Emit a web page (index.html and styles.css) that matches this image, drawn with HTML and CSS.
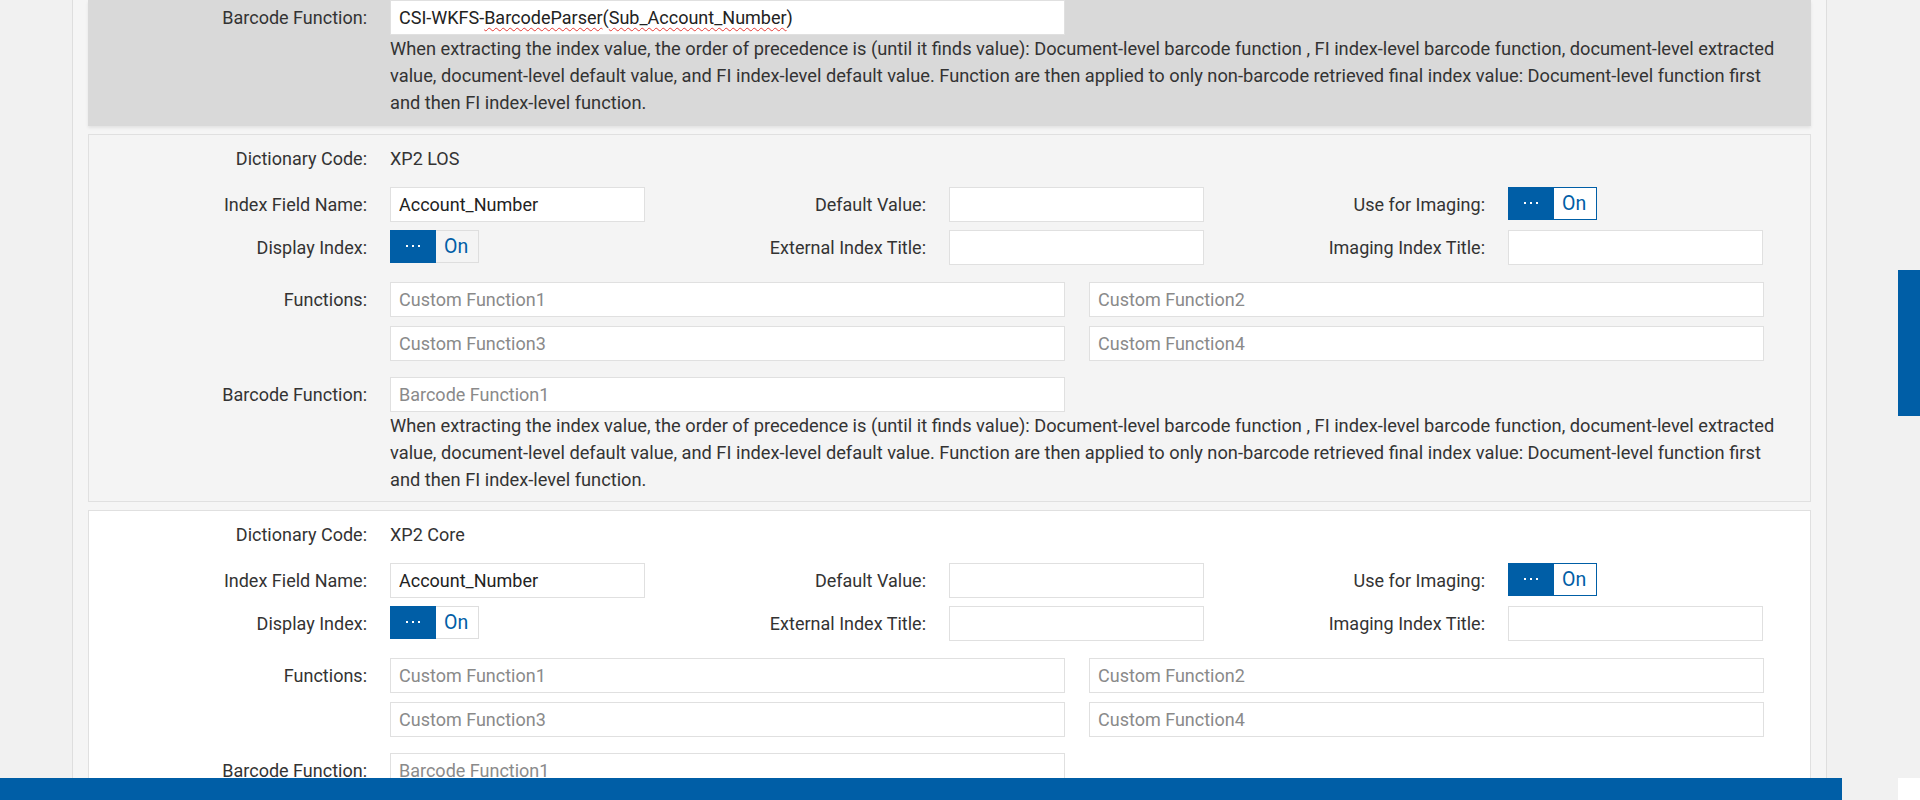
FILE: index.html
```html
<!DOCTYPE html>
<html lang="en">
<head>
<meta charset="utf-8">
<title>Index Fields</title>
<link rel="stylesheet" href="styles.css">
</head>
<body>
<div class="page">
  <main class="panel">
    <section class="card card--selected">
      <div class="row">
        <div class="label">Barcode Function:</div>
        <div class="field-col">
          <div class="input input--wide"><span>CSI-WKFS-</span><span class="spell">BarcodeParser</span>(<span class="spell">Sub_Account_Number</span>)</div>
          <p class="note">When extracting the index value, the order of precedence is (until it finds value): Document-level barcode function , FI index-level barcode function, document-level extracted value, document-level default value, and FI index-level default value. Function are then applied to only non-barcode retrieved final index value: Document-level function first and then FI index-level function.</p>
        </div>
      </div>
    </section>

    <section class="card card--alt">
      <div class="row row--dict">
        <div class="label">Dictionary Code:</div>
        <div class="value">XP2 LOS</div>
      </div>
      <div class="fields">
        <div class="label">Index Field Name:</div>
        <input class="input" type="text" value="Account_Number">
        <div class="label">Default Value:</div>
        <input class="input" type="text" value="">
        <div class="label">Use for Imaging:</div>
        <div class="toggle toggle--focus"><span class="knob"><i></i><i></i><i></i></span><span class="state">On</span></div>

        <div class="label">Display Index:</div>
        <div class="toggle"><span class="knob"><i></i><i></i><i></i></span><span class="state">On</span></div>
        <div class="label">External Index Title:</div>
        <input class="input" type="text" value="">
        <div class="label">Imaging Index Title:</div>
        <input class="input" type="text" value="">
      </div>
      <div class="row row--functions">
        <div class="label">Functions:</div>
        <div class="func-grid">
          <input class="input" type="text" placeholder="Custom Function1">
          <input class="input" type="text" placeholder="Custom Function2">
          <input class="input" type="text" placeholder="Custom Function3">
          <input class="input" type="text" placeholder="Custom Function4">
        </div>
      </div>
      <div class="row row--barcode">
        <div class="label">Barcode Function:</div>
        <div class="field-col">
          <input class="input input--wide" type="text" placeholder="Barcode Function1">
          <p class="note">When extracting the index value, the order of precedence is (until it finds value): Document-level barcode function , FI index-level barcode function, document-level extracted value, document-level default value, and FI index-level default value. Function are then applied to only non-barcode retrieved final index value: Document-level function first and then FI index-level function.</p>
        </div>
      </div>
    </section>

    <section class="card card--white">
      <div class="row row--dict">
        <div class="label">Dictionary Code:</div>
        <div class="value">XP2 Core</div>
      </div>
      <div class="fields">
        <div class="label">Index Field Name:</div>
        <input class="input" type="text" value="Account_Number">
        <div class="label">Default Value:</div>
        <input class="input" type="text" value="">
        <div class="label">Use for Imaging:</div>
        <div class="toggle toggle--focus"><span class="knob"><i></i><i></i><i></i></span><span class="state">On</span></div>

        <div class="label">Display Index:</div>
        <div class="toggle"><span class="knob"><i></i><i></i><i></i></span><span class="state">On</span></div>
        <div class="label">External Index Title:</div>
        <input class="input" type="text" value="">
        <div class="label">Imaging Index Title:</div>
        <input class="input" type="text" value="">
      </div>
      <div class="row row--functions">
        <div class="label">Functions:</div>
        <div class="func-grid">
          <input class="input" type="text" placeholder="Custom Function1">
          <input class="input" type="text" placeholder="Custom Function2">
          <input class="input" type="text" placeholder="Custom Function3">
          <input class="input" type="text" placeholder="Custom Function4">
        </div>
      </div>
      <div class="row row--barcode">
        <div class="label">Barcode Function:</div>
        <div class="field-col">
          <input class="input input--wide" type="text" placeholder="Barcode Function1">
          <p class="note">When extracting the index value, the order of precedence is (until it finds value): Document-level barcode function , FI index-level barcode function, document-level extracted value, document-level default value, and FI index-level default value. Function are then applied to only non-barcode retrieved final index value: Document-level function first and then FI index-level function.</p>
        </div>
      </div>
    </section>
  </main>

  <div class="side-tab"></div>
  <footer class="bottom-bar"></footer>
  <div class="bottom-corner"></div>
</div>
</body>
</html>
```

FILE: styles.css
```css
* { box-sizing: border-box; }

html, body {
  margin: 0;
  padding: 0;
  height: 800px;
  overflow: hidden;
}

body {
  background: #f1f1f1;
  font-family: Roboto, "Liberation Sans", Arial, sans-serif;
  font-size: 18px;
  color: #333;
}

.page {
  height: 800px;
  overflow: hidden;
}

.panel {
  margin-left: 72px;
  width: 1755px;
  min-height: 800px;
  background: #f5f5f5;
  border-left: 1px solid #dedede;
  border-right: 1px solid #dedede;
  padding: 0 15px;
  display: flex;
  flex-direction: column;
  gap: 8px;
}

.card {
  border: 1px solid #e0e0e0;
  padding: 10px 24px 8px 0;
}

.card--selected {
  background: #d9d9d9;
  border-color: #d9d9d9;
  border-top: 0;
  padding-top: 0;
  padding-bottom: 9px;
  box-shadow: 0 2px 3px rgba(0, 0, 0, 0.08);
}

.card--alt { background: #f4f4f4; }
.card--white { background: #fff; }

.row {
  display: flex;
  column-gap: 23px;
}

.label {
  width: 278px;
  flex: none;
  text-align: right;
  line-height: 35px;
  white-space: nowrap;
  color: #333;
}

.row--dict {
  margin-bottom: 15px;
}
.row--dict .label,
.row--dict .value {
  line-height: 27px;
}
.row--dict .value { color: #333; }

.fields {
  display: grid;
  grid-template-columns: 278px 255px 258px 255px 258px 255px;
  column-gap: 23px;
  row-gap: 8px;
  align-items: start;
}
.fields .label { width: auto; }

.row--functions { margin-top: 17px; }
.row--barcode { margin-top: 16px; }

.func-grid {
  display: grid;
  grid-template-columns: 675px 675px;
  column-gap: 24px;
  row-gap: 9px;
}

.field-col {
  flex: 1;
  min-width: 0;
}

.input {
  display: block;
  width: 100%;
  height: 35px;
  margin: 0;
  padding: 0 8px;
  border: 1px solid #e0e0e0;
  border-radius: 0;
  background: #fff;
  font-family: Roboto, "Liberation Sans", Arial, sans-serif;
  font-size: 18px;
  line-height: 33px;
  color: #222;
  outline: none;
}
div.input {
  white-space: nowrap;
  overflow: hidden;
}
.input::placeholder { color: #8a8a8a; opacity: 1; }

.input--wide { width: 675px; }

.spell {
  text-decoration: underline wavy #e53935;
  text-decoration-thickness: 1px;
  text-underline-offset: 3px;
  text-decoration-skip-ink: none;
}

.note {
  margin: 0;
  font-size: 18.25px;
  line-height: 27px;
  color: #333;
}

.toggle {
  display: flex;
  width: 89px;
  height: 33px;
}
.knob {
  width: 46px;
  flex: none;
  background: #005ea6;
  display: flex;
  align-items: center;
  justify-content: center;
  gap: 4px;
  padding-bottom: 2px;
}
.knob i {
  display: block;
  width: 2px;
  height: 2px;
  background: #fff;
}
.state {
  flex: 1;
  border: 1px solid #dedede;
  border-left: 0;
  color: #005ea6;
  line-height: 31px;
  padding-left: 8px;
  font-size: 19.5px;
}
.toggle--focus .state {
  border: 1px solid #005ea6;
  border-left: 0;
  background: #fff;
}

.side-tab {
  position: fixed;
  right: 0;
  top: 270px;
  width: 22px;
  height: 146px;
  background: #005ea6;
}

.bottom-bar {
  position: fixed;
  left: 0;
  bottom: 0;
  width: 1842px;
  height: 22px;
  background: #005ea6;
}

.bottom-corner {
  position: fixed;
  right: 0;
  bottom: 0;
  width: 22px;
  height: 22px;
  background: #fff;
}
```
